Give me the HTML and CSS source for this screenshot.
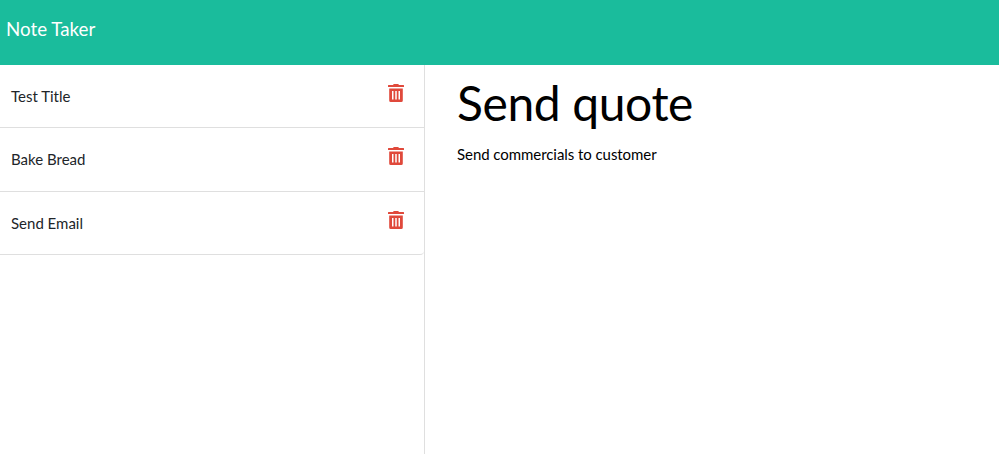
FILE: index.html
```html
<!DOCTYPE html>
<html lang="en">
<head>
<meta charset="utf-8">
<title>Note Taker</title>
<link rel="stylesheet" href="styles.css">
</head>
<body>
<svg class="sprite"><symbol id="trash" viewBox="0 0 16 18"><path fill-rule="evenodd" d="M.5 1H5l.5-.7Q5.700 0 6.100 0h3.800q.4 0 .6.300L11 1h4.500q.5 0 .5.500V3H0V1.500Q0 1 .5 1zM1.200 4.500h13.600v12q0 1.500-1.500 1.500H2.700q-1.500 0-1.500-1.500zM4 7v8.500h1.500V7zM7.250 7v8.500h1.500V7zM10.500 7v8.500H12V7z"/></symbol></svg>
<nav class="navbar"><a class="brand">Note Taker</a></nav>
<main class="layout">
<ul class="list">
<li class="item"><span>Test Title</span><svg class="trash"><use href="#trash"/></svg></li>
<li class="item"><span>Bake Bread</span><svg class="trash"><use href="#trash"/></svg></li>
<li class="item"><span>Send Email</span><svg class="trash"><use href="#trash"/></svg></li>
</ul>
<section class="note">
<h1 class="title">Send quote</h1>
<p class="text">Send commercials to customer</p>
</section>
</main>
</body>
</html>
```
FILE: styles.css
```css
* { box-sizing: border-box; }
body { margin: 0; height: 454px; display: flex; flex-direction: column; overflow: hidden; font: 15px/22.5px Lato, sans-serif; color: #212529; background: #fff; }
.sprite { display: none; }
.navbar { flex: 0 0 65px; padding: 15px 6px; background: #1abc9c; color: #fff; }
.brand { display: block; font-size: 18.75px; line-height: 28px; }
.layout { flex: 1; display: flex; }
.list { width: 425px; margin: 0; padding: 0; list-style: none; border-right: 1px solid #dfdfdf; }
.item { height: 63px; padding: 20px 20px 0 11px; display: flex; justify-content: space-between; align-items: flex-start; border-bottom: 1px solid #dfdfdf; }
.item:nth-child(2) { height: 64px; }
.item:last-child { border-bottom-right-radius: 4px; }
.trash { width: 16px; height: 18px; margin-top: -1px; fill: #e0493b; }
.note { padding: 9px 32px; color: #000; }
.title { margin: 0; font-size: 48px; font-weight: 400; line-height: 58px; letter-spacing: -0.4px; }
.text { margin: 11px 0 0; letter-spacing: -0.06px; }
```
